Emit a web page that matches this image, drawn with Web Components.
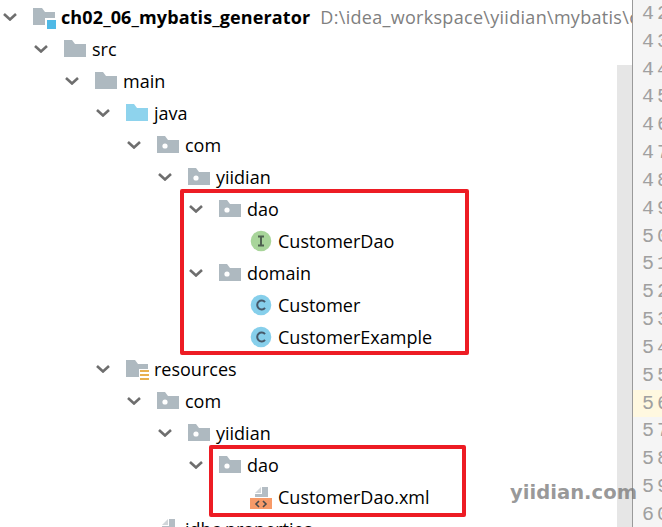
<!DOCTYPE html>
<html>
<head>
<meta charset="utf-8">
<style>
  html, body { margin: 0; height: 527px; overflow: hidden; background: #fff; }
  body { position: relative; display: flex; font-family: "Open Sans", "Noto Sans", sans-serif; }
</style>
</head>
<body>
<project-tree>
  <tree-row depth="0" icon="project" open bold>ch02_06_mybatis_generator<span slot="hint">D:\idea_workspace\yiidian\mybatis\ch02_06_mybatis_generator</span></tree-row>
  <tree-row depth="1" icon="folder" open>src</tree-row>
  <tree-row depth="2" icon="folder" open>main</tree-row>
  <tree-row depth="3" icon="source" open>java</tree-row>
  <tree-row depth="4" icon="package" open>com</tree-row>
  <tree-row depth="5" icon="package" open>yiidian</tree-row>
  <tree-row depth="6" icon="package" open>dao</tree-row>
  <tree-row depth="7" icon="interface">CustomerDao</tree-row>
  <tree-row depth="6" icon="package" open>domain</tree-row>
  <tree-row depth="7" icon="class">Customer</tree-row>
  <tree-row depth="7" icon="class">CustomerExample</tree-row>
  <tree-row depth="3" icon="resources" open>resources</tree-row>
  <tree-row depth="4" icon="package" open>com</tree-row>
  <tree-row depth="5" icon="package" open>yiidian</tree-row>
  <tree-row depth="6" icon="package" open>dao</tree-row>
  <tree-row depth="7" icon="xml">CustomerDao.xml</tree-row>
  <tree-row depth="4" icon="file">jdbc.properties</tree-row>
</project-tree>
<line-gutter from="42" to="60" current="56"></line-gutter>
<mark-box style="left:180px;top:189px;width:289px;height:166px"></mark-box>
<mark-box style="left:209px;top:445px;width:257px;height:72px"></mark-box>
<water-mark>yiidian.com</water-mark>

<script>
const ICONS = {
  project: `<path d="M0 2h9l3 4h10v13H0z" fill="#aeb9c0"/><path d="M12 12h11v11H12z" fill="#fff"/><path d="M14 14h9v9h-9z" fill="#4fb9e6"/>`,
  folder: `<path d="M0 2h8l3 4h11v13H0z" fill="#aeb9c0"/>`,
  source: `<path d="M0 2h8l3 4h11v13H0z" fill="#8ed3ed"/>`,
  package: `<path d="M0 2h8l3 4h11v13H0z" fill="#aeb9c0"/><circle cx="8" cy="12" r="2.6" fill="#fff"/>`,
  resources: `<path d="M0 2h9l3 4h10v13H0z" fill="#aeb9c0"/><path d="M13 11h10v12H13z" fill="#fff"/><path d="M14 12h9v2h-9zM14 16h9v2h-9zM14 20h9v2h-9z" fill="#e8b050"/>`,
  interface: `<circle cx="11" cy="11" r="10.3" fill="#a8d59a"/><path d="M8 6.5h6M8 15.5h6M11 6.5v9" stroke="#4f6150" stroke-width="2" fill="none"/>`,
  class: `<circle cx="11" cy="11" r="10.3" fill="#86cfeb"/><path d="M15 8.2A4.4 4.4 0 1 0 15 13.8" stroke="#46596a" stroke-width="2" fill="none"/>`,
  xml: `<path d="M5 7l6-6v6z" fill="#d0d5d9"/><path d="M12 1h6v10H5V8h7z" fill="#b4bdc4"/><path d="M0 12h22v11H0z" fill="#f79a68"/><path d="M9 15l-3 3 3 3M13 15l3 3-3 3" stroke="#4a4a4a" stroke-width="1.6" fill="none"/>`,
  file: `<path d="M5 7l6-6v6z" fill="#d0d5d9"/><path d="M12 1h6v21H5V8h7z" fill="#b4bdc4"/>`
};

class TreeIcon extends HTMLElement {
  connectedCallback() {
    this.attachShadow({ mode: 'open' });
    const name = this.getAttribute('name');
    this.shadowRoot.innerHTML = `
      <style>
        :host { display: block; width: 22px; height: 22px; flex: none; }
        svg { display: block; overflow: visible; }
      </style>
      <svg width="22" height="22" viewBox="0 0 22 22">${ICONS[name] || ''}</svg>
    `;
  }
}
customElements.define('tree-icon', TreeIcon);

class TreeRow extends HTMLElement {
  connectedCallback() {
    this.attachShadow({ mode: 'open' });
    const depth = Number(this.getAttribute('depth') || 0);
    const chevron = this.hasAttribute('open')
      ? `<svg class="chev" width="14" height="8" viewBox="0 0 14 8"><path d="M1 1l6 5.5L13 1" stroke="#6e6e6e" stroke-width="2.6" fill="none"/></svg>`
      : `<span class="chev"></span>`;
    this.shadowRoot.innerHTML = `
      <style>
        :host { display: flex; align-items: center; height: 32px; padding-left: ${3 + depth * 31}px; white-space: nowrap; color: #000; }
        .chev { display: block; width: 14px; height: 8px; flex: none; margin-right: 16px; }
        .label { margin-left: 6px; }
        :host([bold]) .label { font-weight: 700; letter-spacing: .12px; }
        .hint { margin-left: 10px; color: #808080; letter-spacing: .3px; }
      </style>
      ${chevron}
      <tree-icon name="${this.getAttribute('icon')}"></tree-icon>
      <span class="label"><slot></slot></span>
      <span class="hint"><slot name="hint"></slot></span>
    `;
  }
}
customElements.define('tree-row', TreeRow);

class ProjectTree extends HTMLElement {
  connectedCallback() {
    this.attachShadow({ mode: 'open' });
    this.shadowRoot.innerHTML = `
      <style>
        :host { display: block; position: relative; flex: none; box-sizing: border-box; width: 633px; height: 527px; padding-top: 1px; overflow: hidden; font-size: 18px; border-right: 1px solid #9a9a9a; }
        .strip { position: absolute; left: 617px; right: 0; top: 65px; bottom: 0; background: #e6e6e6; }
      </style>
      <slot></slot>
      <div class="strip"></div>
    `;
  }
}
customElements.define('project-tree', ProjectTree);

class LineGutter extends HTMLElement {
  connectedCallback() {
    this.attachShadow({ mode: 'open' });
    const from = Number(this.getAttribute('from'));
    const to = Number(this.getAttribute('to'));
    const current = Number(this.getAttribute('current'));
    let rows = '';
    for (let n = from; n <= to; n++) {
      rows += `<div class="line${n === current ? ' current' : ''}">${n}</div>`;
    }
    this.shadowRoot.innerHTML = `
      <style>
        :host { display: block; flex: 1; min-width: 0; height: 527px; overflow: hidden; background: #f5f5f5; font-family: "Liberation Mono", monospace; font-size: 20px; color: #a0a0a0; }
        .line { height: 27.83px; line-height: 27.83px; padding-left: 9px; letter-spacing: 3px; white-space: nowrap; }
        .line:first-child { margin-top: -2px; }
        .current { background: #fff8e0; }
      </style>
      ${rows}
    `;
  }
}
customElements.define('line-gutter', LineGutter);

class MarkBox extends HTMLElement {
  connectedCallback() {
    this.attachShadow({ mode: 'open' });
    this.shadowRoot.innerHTML = `
      <style>
        :host { display: block; position: absolute; box-sizing: border-box; border: 4px solid #ed1c24; border-radius: 2px; pointer-events: none; }
      </style>
    `;
  }
}
customElements.define('mark-box', MarkBox);

class WaterMark extends HTMLElement {
  connectedCallback() {
    this.attachShadow({ mode: 'open' });
    this.shadowRoot.innerHTML = `
      <style>
        :host { display: block; position: absolute; left: 510px; top: 481px; font-family: "DejaVu Sans", sans-serif; font-size: 19.6px; font-weight: 700; color: rgba(120,120,120,.75); white-space: nowrap; }
      </style>
      <slot></slot>
    `;
  }
}
customElements.define('water-mark', WaterMark);
</script>
</body>
</html>
